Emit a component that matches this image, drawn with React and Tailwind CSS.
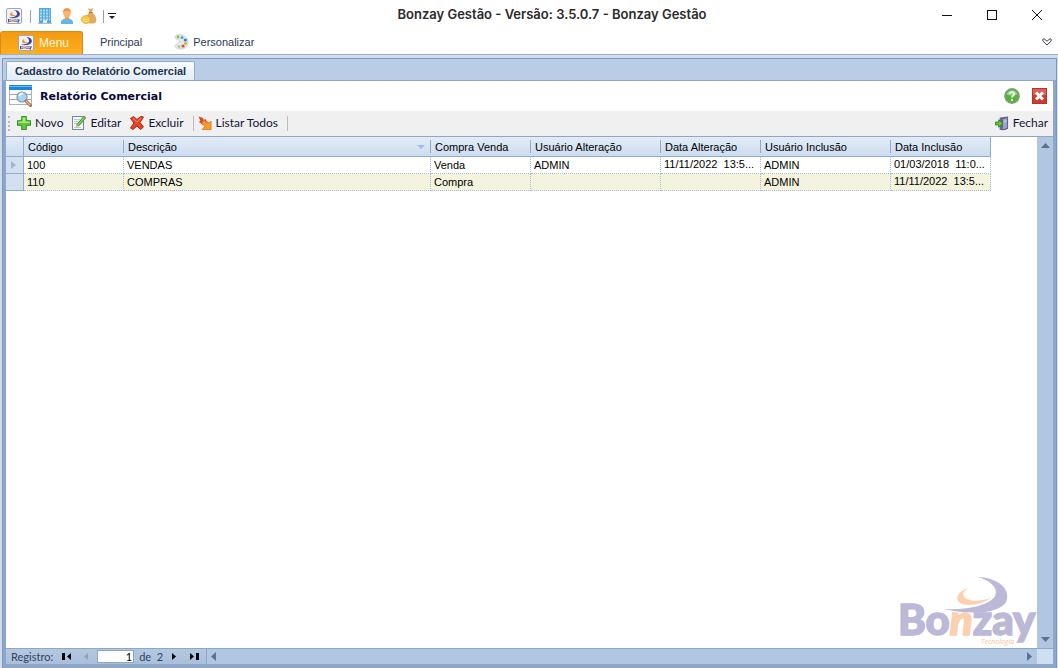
import { useState } from "react";

const columns = [
  { key: "codigo", label: "Código", width: "w-[100px]" },
  { key: "descricao", label: "Descrição", width: "w-[307px]", sorted: true },
  { key: "tipo", label: "Compra Venda", width: "w-[100px]" },
  { key: "usuarioAlteracao", label: "Usuário Alteração", width: "w-[130px]" },
  { key: "dataAlteracao", label: "Data Alteração", width: "w-[100px]", date: true },
  { key: "usuarioInclusao", label: "Usuário Inclusão", width: "w-[130px]" },
  { key: "dataInclusao", label: "Data Inclusão", width: "w-[100px]", date: true },
];

const rows = [
  {
    codigo: "100",
    descricao: "VENDAS",
    tipo: "Venda",
    usuarioAlteracao: "ADMIN",
    dataAlteracao: "11/11/2022  13:5...",
    usuarioInclusao: "ADMIN",
    dataInclusao: "01/03/2018  11:0...",
  },
  {
    codigo: "110",
    descricao: "COMPRAS",
    tipo: "Compra",
    usuarioAlteracao: "",
    dataAlteracao: "",
    usuarioInclusao: "ADMIN",
    dataInclusao: "11/11/2022  13:5...",
  },
];

/* ---------- icons ---------- */

const AppIcon = () => (
  <svg width="16" height="16" viewBox="0 0 16 16">
    <rect x="0.5" y="0.5" width="15" height="15" rx="1.5" fill="#f3f3f8" stroke="#a3a6b4" />
    <path d="M8 2C15 2 15.500 8 11 9.500C8.500 10.400 5 10.400 2.500 9.800C8 9.400 11.500 8 11 5.500C10.800 3.800 9.500 2.700 8 2Z" fill="#37479b" />
    <path d="M6.500 4C3 5.500 3.500 8.300 7 8.200C8.300 8.100 9.200 7.600 9.800 7C7.500 7.400 5.300 6.800 6.500 4Z" fill="#ee8a3c" />
    <path d="M2 11.800H5.500M8 11.800H14M2 13.500H5.500M8 13.500H13" stroke="#7f88b8" strokeWidth="1.200" />
    <path d="M5.500 12.600H8" stroke="#ee8a3c" strokeWidth="2" />
    <path d="M2.500 11V14.300M12.800 12L12 14.800" stroke="#37479b" />
  </svg>
);

const BuildingIcon = () => (
  <svg width="16" height="16" viewBox="0 0 16 16">
    <rect x="2" y="0" width="12" height="15" fill="#54a8de" />
    <path d="M3 2.500H13M3 5.500H13M3 8.500H13M3 11.500H13" stroke="#a8d9f6" strokeWidth="2" strokeDasharray="2 1" />
    <rect x="6" y="12" width="4" height="3" fill="#d9effb" />
    <rect x="1" y="15" width="14" height="1" fill="#a9bccb" />
  </svg>
);

const UserIcon = () => (
  <svg width="16" height="16" viewBox="0 0 16 16">
    <path d="M2 16C1.500 12 4 10.500 8 10.500S14.500 12 14 16Z" fill="#5db6ee" />
    <path d="M6 8H10V11L8 13L6 11Z" fill="#e79b50" />
    <ellipse cx="8" cy="5" rx="3.800" ry="4.800" fill="#f8b56b" />
    <path d="M4 5C3.500-1.300 12.500-1.300 12 5C11.500 2 5 1.500 4 5Z" fill="#e79045" />
  </svg>
);

const MoneyIcon = () => (
  <svg width="16" height="16" viewBox="0 0 16 16">
    <path d="M7 0L9 1L12 0L11 4C15 8 16 11 15 14C14 16 7 16 6 14C4 10 6 7 8.500 4Z" fill="#dfab67" />
    <path d="M8 4.500H11.500" stroke="#a96e32" />
    <ellipse cx="5" cy="11.500" rx="4.500" ry="4" fill="#fbc63b" stroke="#e1a020" strokeWidth="0.700" />
    <path d="M2 10.500C4 12 7 12 8 10.500M2 12.500C4 14 7 14 8.500 12.500" stroke="#fde58c" fill="none" />
  </svg>
);

const PaletteIcon = () => (
  <svg width="15" height="16" viewBox="0 0 15 16">
    <path d="M3 1C9-0.500 14 3 14 8.500C14 13 10 15.700 5.500 15C1.500 14.500 0 12 2 10.500C4 9 6 9 5.500 7C5 5 1 5.500 1 3.500C1 2 1.800 1.300 3 1Z" fill="#e9e8e8" stroke="#c5c4c8" strokeWidth="0.700" />
    <circle cx="4" cy="3" r="1.400" fill="#7cc15a" />
    <circle cx="8" cy="3.500" r="1.500" fill="#47a7dc" />
    <circle cx="11.300" cy="6" r="1.600" fill="#2c80c4" />
    <circle cx="11.500" cy="9.500" r="1.400" fill="#e5a33a" />
    <circle cx="9" cy="12" r="1.600" fill="#d8502f" />
    <circle cx="5" cy="12.500" r="1.300" fill="#8cc99b" />
  </svg>
);

const SearchTableIcon = () => (
  <svg width="24" height="22" viewBox="0 0 24 22">
    <rect x="0.500" y="0.500" width="22" height="19" fill="#fff" stroke="#aab2bd" />
    <rect x="0" y="0" width="23" height="5" fill="#1c86dc" />
    <rect x="0" y="1" width="23" height="1" fill="#65bbf7" />
    <path d="M1 9.500H22M1 14.500H22" stroke="#a2a8b2" />
    <circle cx="13" cy="12" r="5" fill="#a9d7f5" stroke="#7c97b1" strokeWidth="1.200" />
    <path d="M10 11C10.500 9 12 8.300 14 8.600" stroke="#fff" strokeWidth="1.500" fill="none" />
    <path d="M17 16L21.500 20.500" stroke="#a95f35" strokeWidth="3" strokeLinecap="round" />
    <path d="M17 16L21 20" stroke="#efb884" strokeWidth="1.300" strokeLinecap="round" />
  </svg>
);

const PlusIcon = () => (
  <svg width="14" height="14" viewBox="0 0 15 15">
    <path d="M5 0.500H10V5H14.500V10H10V14.500H5V10H0.500V5H5Z" fill="#62c834" stroke="#2c8a1c" />
    <path d="M6 1.500H9V6H13.500V7.500H1.500V6H6Z" fill="#a5e67f" />
  </svg>
);

const EditIcon = () => (
  <svg width="14" height="14" viewBox="0 0 14 14">
    <rect x="0.500" y="0.500" width="11" height="13" fill="#f5f9fd" stroke="#6e8ba6" />
    <path d="M2 3.500H8M2 5.500H6M2 7.500H5M2 11.500H9" stroke="#bccbdb" />
    <path d="M12.500 1.500L5.500 9.500" stroke="#2d8b26" strokeWidth="3.200" />
    <path d="M12.500 1.500L5.500 9.500" stroke="#82d45c" strokeWidth="1.600" />
    <path d="M3.500 12L4 8.800L6.500 11Z" fill="#dfba7c" />
    <path d="M11.200 0.800L12.500 0L14 1.200L13.500 2.700Z" fill="#d95f4b" />
  </svg>
);

const DeleteIcon = () => (
  <svg width="14" height="14" viewBox="0 0 14 14">
    <path d="M0.500 2.500L3.500 0.500L7 3.500L11 0.500L13.500 1L10 6.500L13.500 11L10.500 13.500L7 10L3 13.500L0.500 12L4 7Z" fill="#e3452a" stroke="#b52312" />
    <path d="M3 2.500L7 6L11.500 2" stroke="#f58d70" fill="none" />
  </svg>
);

const ListAllIcon = () => (
  <svg width="14" height="14" viewBox="0 0 15 15">
    <path d="M0.500 0.500L5 2L6 4L8.500 3.500L9.500 7L5.500 10L1 6.500L2.500 5Z" fill="#d9482c" />
    <path d="M6 4L9.500 8L10 6L12 7.500L14 5.500V14.500H4.500L7.500 11L4 8Z" fill="#f99b27" stroke="#dc6b1b" strokeWidth="0.800" />
  </svg>
);

const ExitIcon = () => (
  <svg width="14" height="15" viewBox="0 0 15 15">
    <path d="M5 1L14 0V13L11 14.500H5Z" fill="#666c99" />
    <path d="M8 2.500L13.300 1V12.500L8 14.500Z" fill="#9da4ca" stroke="#535984" strokeWidth="0.800" />
    <path d="M10 4.500L12 4V6L10 6.500Z" fill="#d4d8ec" />
    <path d="M0.500 6H4V3.500L8.500 7.500L4 11.500V9H0.500Z" fill="#69cc37" stroke="#2a831d" />
  </svg>
);

const HelpIcon = () => (
  <svg width="16" height="16" viewBox="0 0 16 16">
    <circle cx="8" cy="8" r="7.300" fill="#55b33b" stroke="#8c9c8b" strokeWidth="1.200" />
    <path d="M2.500 6.500C3.500 1 12.500 1 13.500 6.500C10 8 6 8 2.500 6.500Z" fill="#93d57c" />
    <path d="M5.800 6C5.800 3.400 10.300 3.500 10.200 6C10.100 7.500 8 7.700 8 9.500" stroke="#fff" strokeWidth="1.800" fill="none" />
    <circle cx="8" cy="12" r="1.100" fill="#fff" />
  </svg>
);

const CloseBoxIcon = () => (
  <svg width="15" height="16" viewBox="0 0 15 16">
    <rect x="0.500" y="0.500" width="14" height="15" fill="#d4382b" stroke="#a93a33" />
    <rect x="1" y="1" width="13" height="6" fill="#df6155" />
    <path d="M4 4.500L11 11.500M11 4.500L4 11.500" stroke="#fff" strokeWidth="3" />
  </svg>
);

const BonzayLogo = () => (
  <svg width="140" height="72" viewBox="0 0 140 72">
    <path d="M80 1C101 1 115 14 109 26C102 38 73 39 47 33C70 34 92 30 98 20C102 12 93 4 80 1Z" fill="#bbb8d8" />
    <path d="M71 12C56 17 58 29 71 29C80 29 88 26 94 22C84 25 76 26 70 23C65 20 65 16 71 12Z" fill="#fad0ae" />
    <text
      x="1"
      y="59"
      fontSize="42"
      fontWeight="900"
      fontFamily="Lato, sans-serif"
      fill="#bbb8d8"
      stroke="#bbb8d8"
      strokeWidth="1.500"
    >
      Bo<tspan fill="#fad0ae" stroke="#fad0ae" fontStyle="italic">n</tspan>zay
    </text>
    <text x="84" y="68" fontSize="7" fontStyle="italic" fontFamily="Open Sans, sans-serif" fill="#f8c297">
      Tecnologia
    </text>
  </svg>
);

const Arrow = ({ d, className = "fill-[#5b7196]", w = 8, h = 8 }) => (
  <svg width={w} height={h} viewBox={`0 0 ${w} ${h}`} className={className}>
    <path d={d} />
  </svg>
);

/* ---------- layout parts ---------- */

const TitleBar = () => (
  <header className="flex h-[30px] shrink-0 items-center bg-white">
    <div className="flex flex-1 items-center pl-[6px] pt-[2px]">
      <AppIcon />
      <span className="ml-[8px] mr-[6px] h-[13px] w-px bg-[#a0a0a0]" />
      <div className="flex gap-[6px]">
        <button type="button" aria-label="Empresa"><BuildingIcon /></button>
        <button type="button" aria-label="Usuário"><UserIcon /></button>
        <button type="button" aria-label="Financeiro"><MoneyIcon /></button>
      </div>
      <span className="ml-[6px] mr-[4px] h-[13px] w-px bg-[#a0a0a0]" />
      <button type="button" aria-label="Personalizar barra">
        <Arrow w={8} h={7} d="M0 0H8V1H0ZM1 3H7L4 6Z" className="fill-[#222]" />
      </button>
    </div>
    <h1 className="pl-[56px] font-[Inter,sans-serif] text-[13px] font-semibold text-[#2b2b2b]">
      Bonzay Gestão - Versão: 3.5.0.7 - Bonzay Gestão
    </h1>
    <div className="flex flex-1 items-center justify-end gap-[35px] pr-[16px]">
      <button type="button" aria-label="Minimizar">
        <svg width="10" height="10" stroke="#111"><path d="M0 5.500H10" /></svg>
      </button>
      <button type="button" aria-label="Maximizar">
        <svg width="10" height="10" stroke="#111" fill="none"><rect x="0.500" y="0.500" width="9" height="9" /></svg>
      </button>
      <button type="button" aria-label="Fechar janela">
        <svg width="10" height="10" stroke="#111"><path d="M0 0L10 10M10 0L0 10" /></svg>
      </button>
    </div>
  </header>
);

const Ribbon = () => (
  <nav className="flex h-[24px] shrink-0 items-stretch bg-white text-[11px] text-[#2b3a55]">
    <button
      type="button"
      className="mt-px flex w-[83px] items-center gap-[5px] rounded-t-[3px] border border-b-0 border-[#d98a17] bg-gradient-to-b from-[#f39a13] to-[#ffae1f] pl-[17px] text-[12px] text-[#fff6dc]"
    >
      <AppIcon />
      Menu
    </button>
    <button type="button" className="ml-[17px]">Principal</button>
    <button type="button" className="ml-[32px] flex items-center gap-[4px]">
      <PaletteIcon />
      Personalizar
    </button>
    <button type="button" aria-label="Recolher" className="ml-auto mr-[6px]">
      <svg width="10" height="8" viewBox="0 0 10 8" fill="none" stroke="#445">
        <path d="M5 7L0.800 3V1.200L2 0.700L5 3.200L8 0.700L9.200 1.200V3Z" />
      </svg>
    </button>
  </nav>
);

const ToolButton = ({ icon, children }) => (
  <button type="button" className="flex items-center gap-[4px]">
    {icon}
    {children}
  </button>
);

const Toolbar = () => (
  <div className="flex h-[25px] shrink-0 items-center bg-[#f0f0f0] pl-[2px] pr-[5px] pb-px font-[Lato,sans-serif] text-[12px] text-[#141438]">
    <span className="mr-[7px] h-[15px] border-l-2 border-dotted border-[#b8b8b8]" />
    <div className="flex items-center gap-[9px]">
      <ToolButton icon={<PlusIcon />}>Novo</ToolButton>
      <ToolButton icon={<EditIcon />}>Editar</ToolButton>
      <ToolButton icon={<DeleteIcon />}>Excluir</ToolButton>
      <span className="h-[15px] w-px bg-[#bdbdbd]" />
    </div>
    <div className="ml-[4px] flex items-center gap-[9px]">
      <ToolButton icon={<ListAllIcon />}>Listar Todos</ToolButton>
      <span className="h-[15px] w-px bg-[#bdbdbd]" />
    </div>
    <div className="ml-auto">
      <ToolButton icon={<ExitIcon />}>Fechar</ToolButton>
    </div>
  </div>
);

const Grid = () => (
  <table className="table-fixed border-separate border-spacing-0 text-[11px] leading-[16px] text-black">
    <thead>
      <tr className="h-[20px] bg-gradient-to-b from-[#e2ecf7] to-[#cbdcef]">
        <th className="w-[18px] border-b border-r border-[#93abc9] p-0" aria-label="Seleção" />
        {columns.map((col) => (
          <th
            key={col.key}
            scope="col"
            className={`${col.width} border-b border-[#93abc9] p-0 text-left font-normal last:border-r`}
          >
            <div className="flex items-center justify-between">
              <span className="pl-[4px]">{col.label}</span>
              {col.sorted && (
                <Arrow w={8} h={4} d="M0 0H8L4 4Z" className="ml-auto mr-[5px] fill-[#9dbfe8]" />
              )}
              {col.key !== "dataInclusao" && <span className="h-[13px] w-px bg-[#93abc9]" />}
            </div>
          </th>
        ))}
      </tr>
    </thead>
    <tbody>
      {rows.map((row, i) => (
        <tr key={row.codigo} className="h-[17px] odd:bg-white even:bg-[#f3f3de]">
          <td className="border-b border-r border-[#93abc9] bg-[#d3e0f0] p-0">
            {i === 0 && <Arrow w={5} h={8} d="M0 0L5 4L0 8Z" className="ml-[5px] fill-[#a3b5cf]" />}
          </td>
          {columns.map((col) => (
            <td
              key={col.key}
              className={`whitespace-pre border-b border-r border-dotted border-[#a9bbd6] py-0 pl-[3px] pr-0 ${
                col.date ? "align-top leading-[14px]" : ""
              }`}
            >
              {row[col.key]}
            </td>
          ))}
        </tr>
      ))}
    </tbody>
  </table>
);

const Navigator = () => {
  const [record, setRecord] = useState("1");

  return (
    <footer className="flex h-[16px] shrink-0 items-center border-t border-[#8fa6c4] bg-gradient-to-b from-[#b3c7e0] to-[#a9c0dc] font-[Lato,sans-serif] text-[11px] leading-[14px] text-[#33435e]">
      <label htmlFor="registro" className="pl-[5px]">Registro:</label>
      <button type="button" aria-label="Primeiro" className="ml-[9px]">
        <Arrow w={9} h={7} d="M0 0H3V7H0ZM9 0V7L5 3.500Z" className="fill-black" />
      </button>
      <button type="button" aria-label="Anterior" className="ml-[13px]">
        <Arrow w={4} h={7} d="M4 0V7L0 3.500Z" className="fill-[#98a3a8]" />
      </button>
      <input
        id="registro"
        value={record}
        onChange={(e) => setRecord(e.target.value)}
        className="ml-[9px] h-[13px] w-[37px] border border-[#8fa6c4] bg-white pr-px text-right text-black"
      />
      <span className="ml-[5px] whitespace-pre">de  2</span>
      <button type="button" aria-label="Próximo" className="ml-[9px]">
        <Arrow w={4} h={7} d="M0 0V7L4 3.500Z" className="fill-black" />
      </button>
      <button type="button" aria-label="Último" className="ml-[14px]">
        <Arrow w={9} h={7} d="M0 0V7L4 3.500ZM6 0H9V7H6Z" className="fill-black" />
      </button>
      <div className="ml-[7px] flex h-full flex-1 items-center justify-between border-l border-[#8fa6c4] bg-[#b1c7e1] pl-[4px] pr-[5px]">
        <button type="button" aria-label="Rolar para a esquerda">
          <Arrow w={5} h={9} d="M5 0V9L0 4.500Z" />
        </button>
        <button type="button" aria-label="Rolar para a direita">
          <Arrow w={5} h={9} d="M0 0V9L5 4.500Z" />
        </button>
      </div>
      <div className="h-full w-[16px] bg-[#cfdef0]" />
    </footer>
  );
};

export default function App() {
  return (
    <div className="flex h-screen flex-col overflow-hidden bg-[#cfdcf0] font-['Liberation_Sans',Arial,sans-serif]">
      <TitleBar />
      <Ribbon />
      <div className="flex min-h-0 flex-1 flex-col border-t border-[#9fb1c8] pl-[2px] pr-px pt-[3px]">
        <main className="flex min-h-0 flex-1 flex-col border border-b-0 border-[#7f99bd] bg-[#bacde6]">
          <div role="tablist" className="flex h-[21px] shrink-0 items-end px-[3px]">
            <button
              type="button"
              role="tab"
              aria-selected="true"
              className="h-[19px] rounded-t-[2px] border border-b-0 border-[#93a9c8] bg-gradient-to-b from-[#f7faff] to-[#e3ecf8] px-[8px] text-[11px] font-bold text-[#24344f]"
            >
              Cadastro do Relatório Comercial
            </button>
          </div>
          <div className="flex min-h-0 flex-1 flex-col border-x-[3px] border-b-4 border-t border-[#8fa6c6] bg-white">
            <div className="flex h-[30px] shrink-0 items-center pl-[3px] pr-[6px]">
              <SearchTableIcon />
              <h2 className="ml-[7px] pt-[2px] font-['DejaVu_Sans',sans-serif] text-[11px] font-bold text-[#06063a]">
                Relatório Comercial
              </h2>
              <div className="ml-auto flex items-center gap-[12px]">
                <button type="button" aria-label="Ajuda"><HelpIcon /></button>
                <button type="button" aria-label="Fechar cadastro"><CloseBoxIcon /></button>
              </div>
            </div>
            <Toolbar />
            <div className="flex min-h-0 flex-1 border-t border-[#8fa6c4]">
              <div className="flex min-w-0 flex-1 flex-col items-start justify-between overflow-hidden">
                <Grid />
                <div className="self-end">
                  <BonzayLogo />
                </div>
              </div>
              <div className="flex w-[16px] shrink-0 flex-col items-center justify-between bg-[#b1c7e1] py-[6px]">
                <button type="button" aria-label="Rolar para cima">
                  <Arrow w={9} h={5} d="M0 5H9L4.500 0Z" />
                </button>
                <button type="button" aria-label="Rolar para baixo">
                  <Arrow w={9} h={5} d="M0 0H9L4.500 5Z" />
                </button>
              </div>
            </div>
            <Navigator />
          </div>
        </main>
      </div>
    </div>
  );
}
